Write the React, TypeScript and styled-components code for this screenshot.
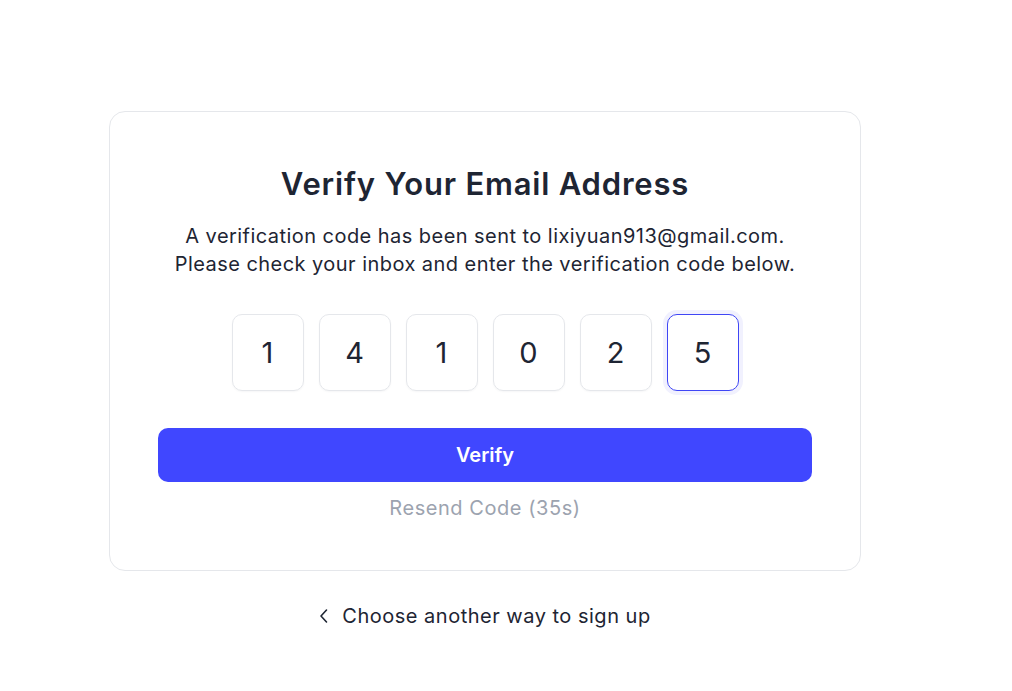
import React from 'react';
import styled, { createGlobalStyle } from 'styled-components';

const GlobalStyle = createGlobalStyle`
  html, body {
    margin: 0;
    padding: 0;
    background: #ffffff;
    font-family: Inter, "Noto Sans", sans-serif;
    color: #1e2533;
  }
`;

const Page = styled.div`
  display: flex;
  flex-direction: column;
  align-items: center;
  width: 752px;
  padding: 111px 0 0 109px;
`;

const Card = styled.div`
  box-sizing: border-box;
  width: 752px;
  border: 1px solid #e5e7eb;
  border-radius: 16px;
  padding: 54px 48px 48px;
  display: flex;
  flex-direction: column;
  align-items: center;
`;

const Title = styled.h1`
  margin: 0;
  font-size: 31px;
  line-height: 36px;
  font-weight: 600;
  letter-spacing: 0.8px;
  color: #1e2533;
`;

const Description = styled.p`
  margin: 20px 0 0;
  font-size: 20px;
  line-height: 28px;
  letter-spacing: 0.45px;
  text-align: center;
  color: #1e2533;
`;

const CodeRow = styled.div`
  display: flex;
  gap: 15px;
  margin-top: 36px;
`;

const Digit = styled.div<{ $active?: boolean }>`
  box-sizing: border-box;
  width: 72px;
  height: 77px;
  border-radius: 10px;
  border: 1px solid ${p => (p.$active ? '#3f46f5' : '#e5e7eb')};
  box-shadow: ${p => (p.$active ? '0 0 0 4px #f1f1fe' : '0 1px 2px rgba(15, 23, 42, 0.04)')};
  display: flex;
  align-items: center;
  justify-content: center;
  font-size: 29px;
  color: #1e2533;
`;

const VerifyButton = styled.button`
  margin-top: 37px;
  width: 100%;
  height: 54px;
  border: none;
  border-radius: 10px;
  background: #4047ff;
  color: #ffffff;
  font-family: inherit;
  font-size: 20px;
  font-weight: 600;
  cursor: pointer;
`;

const Resend = styled.div`
  margin-top: 12px;
  font-size: 20px;
  line-height: 28px;
  letter-spacing: 0.55px;
  color: #9ca3af;
`;

const BackLink = styled.a`
  margin-top: 31px;
  display: flex;
  align-items: center;
  gap: 13px;
  font-size: 20px;
  line-height: 28px;
  letter-spacing: 0.5px;
  color: #1e2533;
  text-decoration: none;
  cursor: pointer;
`;

const code = ['1', '4', '1', '0', '2', '5'];

export default function App() {
  return (
    <>
      <GlobalStyle />
      <Page>
        <Card>
          <Title>Verify Your Email Address</Title>
          <Description>
            A verification code has been sent to lixiyuan913@gmail.com.
            <br />
            Please check your inbox and enter the verification code below.
          </Description>
          <CodeRow>
            {code.map((d, i) => (
              <Digit key={i} $active={i === code.length - 1}>
                {d}
              </Digit>
            ))}
          </CodeRow>
          <VerifyButton>Verify</VerifyButton>
          <Resend>Resend Code (35s)</Resend>
        </Card>
        <BackLink>
          <svg width="10" height="16" viewBox="0 0 10 16" fill="none">
            <path d="M7.5 2 L2 8 L7.5 14" stroke="#1e2533" strokeWidth="1.6" strokeLinecap="round" strokeLinejoin="round" />
          </svg>
          Choose another way to sign up
        </BackLink>
      </Page>
    </>
  );
}
